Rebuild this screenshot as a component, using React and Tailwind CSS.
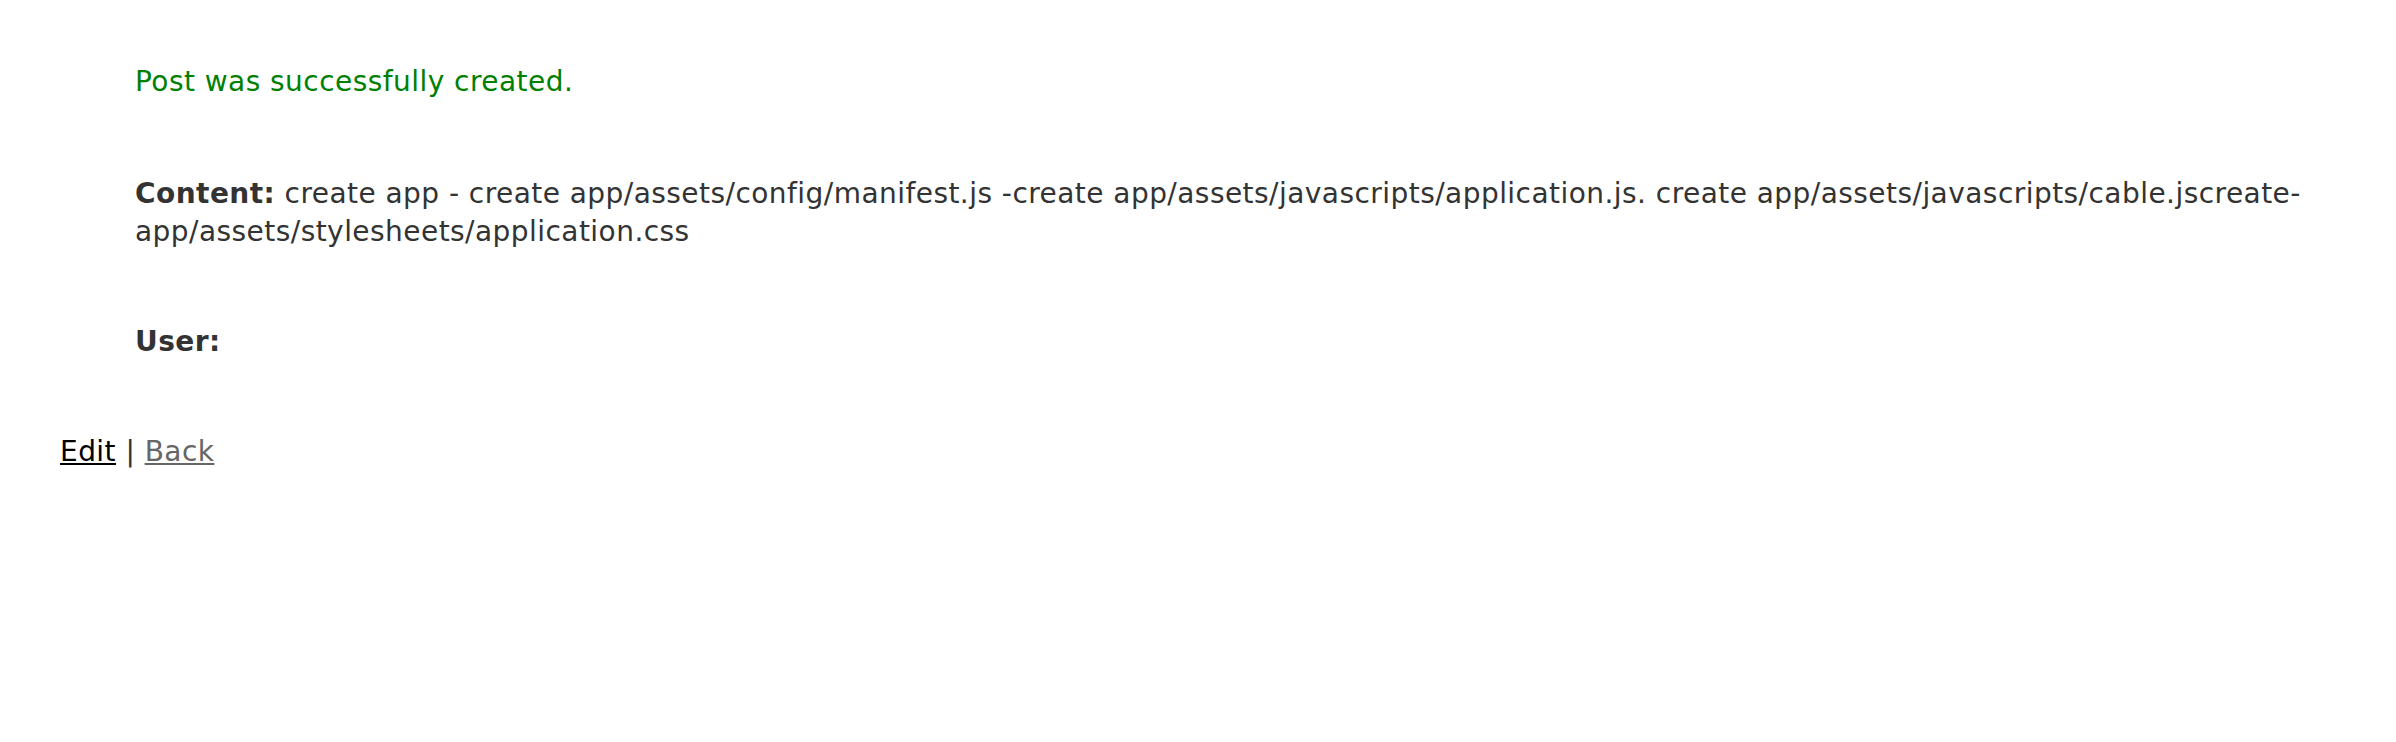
import React from 'react';

export default function App() {
  return (
    <div className="min-h-screen bg-white px-[60px] pt-[63px] font-['DejaVu_Sans',Verdana,sans-serif] text-[28px] leading-[38px] tracking-[0.45px] text-[#333]">
      {/* aviso */}
      <p className="ml-[75px] text-[#008000]">Post was successfully created.</p>

      <p className="mt-[74px] ml-[75px]">
        <strong>Content:</strong> create app - create app/assets/config/manifest.js -create app/assets/javascripts/application.js. create app/assets/javascripts/cable.jscreate-app/assets/stylesheets/application.css
      </p>

      <p className="mt-[72px] ml-[75px]">
        <strong>User:</strong>
      </p>

      <div className="mt-[72px]">
        <a href="#" className="text-black underline">Edit</a> |{' '}
        <a href="#" className="text-[#666] underline">Back</a>
      </div>
    </div>
  );
}
